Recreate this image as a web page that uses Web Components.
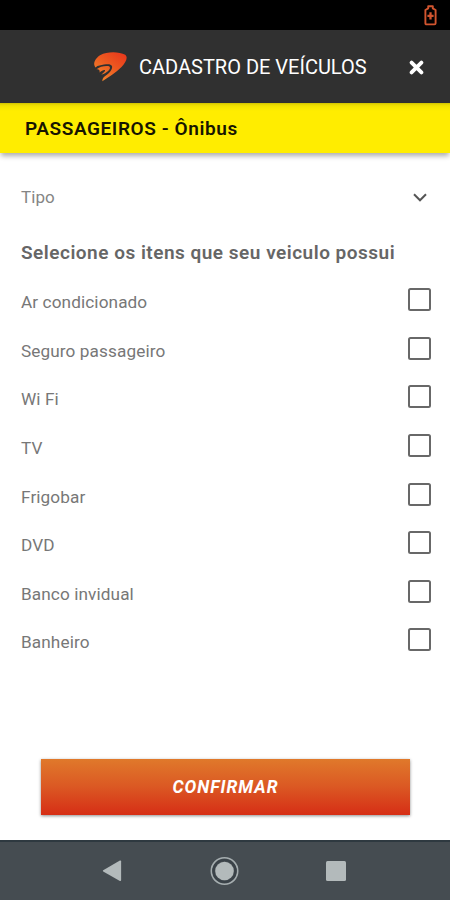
<!DOCTYPE html>
<html lang="pt-BR">
<head>
<meta charset="utf-8">
<title>Cadastro de veículos</title>
<style>
html,body{margin:0;height:100%;background:#fff}
body{font-family:Roboto,"Liberation Sans",sans-serif;overflow:hidden}
</style>
</head>
<body>
<vehicle-app></vehicle-app>
<script>
const define = (name, html) => {
  const t = document.createElement('template');
  t.innerHTML = html;
  customElements.define(name, class extends HTMLElement {
    constructor() {
      super();
      this.attachShadow({mode: 'open'}).append(t.content.cloneNode(true));
    }
  });
};

define('status-bar', `
<style>
:host{display:flex;height:30px;background:#000;justify-content:flex-end;box-sizing:border-box;padding:5px 13px 0 0}
svg{display:block}
</style>
<svg width="13" height="21" viewBox="0 0 13 21" fill="none" stroke="#d2552f" stroke-width="1.9" stroke-linejoin="round">
<path d="M4.200 3.400V1.300h4.600v2.100L11.600 5v13.200q0 1.200-1.200 1.200H2.600q-1.200 0-1.200-1.200V5z"/><path d="M6.500 7.300v7.200M3.400 10.900h6.200" stroke-width="2.300"/></svg>`);

define('app-header', `
<style>
:host{display:flex;height:73px;background:#303030;align-items:center;box-sizing:border-box;padding:1px 26px 0 93px;color:#fff}
.logo{width:35px;height:32px;margin-right:11px}
h1{margin:0;font-size:20px;font-weight:400;white-space:nowrap;flex:1;line-height:24px}
svg{display:block;flex:none}
</style>
<svg class="logo" viewBox="0 0 35 32"><defs><linearGradient id="g" gradientUnits="userSpaceOnUse" x1="30" y1="2" x2="9" y2="30"><stop offset="0" stop-color="#e8391c"/><stop offset=".5" stop-color="#ed5a20"/><stop offset="1" stop-color="#f0852c"/></linearGradient></defs>
<path fill="url(#g)" d="M2.500 16.400C-.8 12.500 2.500 7 7.500 4 13.500.4 26 .2 32.200 3.800 35.600 6.500 32.500 12 28.500 16 22.500 21.800 15 26.500 9.300 30.200 9.200 27 11.500 25.600 13.900 23.800 17.400 21 19.800 17.600 19 15.200 18 12.700 14.500 13 11 13.600 8 14.200 5 14.400 2.500 16.400Z"/>
<path fill="url(#g)" d="M3.500 18.200C6.500 15.400 14 14.200 16.500 15.400 18.500 18 13.700 22 8.300 23.700 10.500 21.900 12.600 20.200 12 19.100 10.700 18.600 8.800 19.400 6.500 21.500 7.100 19.600 6.500 18.300 3.500 18.200Z"/></svg>
<h1><slot></slot></h1>
<svg width="15" height="15" viewBox="0 0 15 15" stroke="#fff" stroke-width="3.800" stroke-linecap="round"><path d="M2.600 2.600l9.800 9.800M12.400 2.600l-9.800 9.800"/></svg>`);

define('category-bar', `
<style>
:host{display:flex;height:49.500px;position:relative;background:linear-gradient(#cfc200 0,#ecdc00 2px,#f5e500 4px,#ffed00 8px);align-items:center;box-sizing:border-box;padding:1px 0 0 25px;box-shadow:0 4px 5px -1px rgba(0,0,0,.32);color:#171500;font-weight:600;font-size:19px;white-space:nowrap;letter-spacing:.58px}
</style><slot></slot>`);

define('type-select', `
<style>
:host{display:flex;height:24px;margin-top:32.500px;align-items:center;justify-content:space-between;padding:0 23px 0 21px;font-size:17px;color:#858585;letter-spacing:.1px}
</style><slot></slot>
<svg width="14" height="9" viewBox="0 0 14 9" fill="none" stroke="#555" stroke-width="2"><path d="M1 1.300l6 6 6-6"/></svg>`);

define('section-title', `
<style>
:host{display:block;margin:32px 0 0 21px;line-height:24px;font-size:19px;font-weight:600;color:#666;white-space:nowrap;letter-spacing:.5px}
</style><slot></slot>`);

define('check-item', `
<style>
:host{display:flex;height:48.600px;box-sizing:border-box;padding:0 19px 0 21px;justify-content:space-between;align-items:center;font-size:17.200px;color:#777;letter-spacing:.1px}
i{display:block;box-sizing:border-box;width:23px;height:23px;border:2px solid #686868;border-radius:2.500px;margin-bottom:5px}
</style><span><slot></slot></span><i></i>`);

define('confirm-button', `
<style>
:host{display:block;margin:0 40px 0 41px}
button{display:block;width:100%;height:56px;border:0;padding:0;background:linear-gradient(#e0792b,#db5823 50%,#d62e15);box-shadow:0 1px 3px rgba(0,0,0,.45);font:italic 700 17.500px Roboto,"Liberation Sans",sans-serif;color:#fff;letter-spacing:1px}
</style><button><slot></slot></button>`);

define('nav-bar', `
<style>
:host{display:flex;height:60px;box-sizing:border-box;background:#454c51;border-top:2px solid #2e3940;align-items:center;justify-content:space-between;padding:0 104px 0 102px}
svg{display:block}
</style>
<svg width="20" height="22" viewBox="0 0 20 22" fill="#b3babb"><path d="M1.200 10.200L17.900.500q1.200-.4 1.200.8v18.800q0 1.200-1.200.8L1.200 11.500q-.8-.7 0-1.300z"/></svg>
<svg width="30" height="30" viewBox="0 0 30 30"><circle cx="15.500" cy="15" r="13.200" fill="none" stroke="#a5adaf" stroke-width="1.600"/><circle cx="15.500" cy="15" r="11" fill="none" stroke="#3a4248" stroke-width="2"/><circle cx="15.500" cy="15" r="9.300" fill="#b3babb"/></svg>
<svg width="20" height="20" viewBox="0 0 20 20"><rect width="20" height="20" rx="1.500" fill="#b3babb"/></svg>`);

define('vehicle-app', `
<style>
:host{display:flex;flex-direction:column;width:450px;height:900px;background:#fff}
main{flex:1}
.list{margin-top:13px}
confirm-button{margin-bottom:25px}
</style>
<status-bar></status-bar>
<app-header>CADASTRO DE VEÍCULOS</app-header>
<category-bar>PASSAGEIROS - Ônibus</category-bar>
<main>
<type-select>Tipo</type-select>
<section-title>Selecione os itens que seu veiculo possui</section-title>
<div class="list">
<check-item>Ar condicionado</check-item>
<check-item>Seguro passageiro</check-item>
<check-item>Wi Fi</check-item>
<check-item>TV</check-item>
<check-item>Frigobar</check-item>
<check-item>DVD</check-item>
<check-item>Banco invidual</check-item>
<check-item>Banheiro</check-item>
</div>
</main>
<confirm-button>CONFIRMAR</confirm-button>
<nav-bar></nav-bar>`);
</script>
</body>
</html>
